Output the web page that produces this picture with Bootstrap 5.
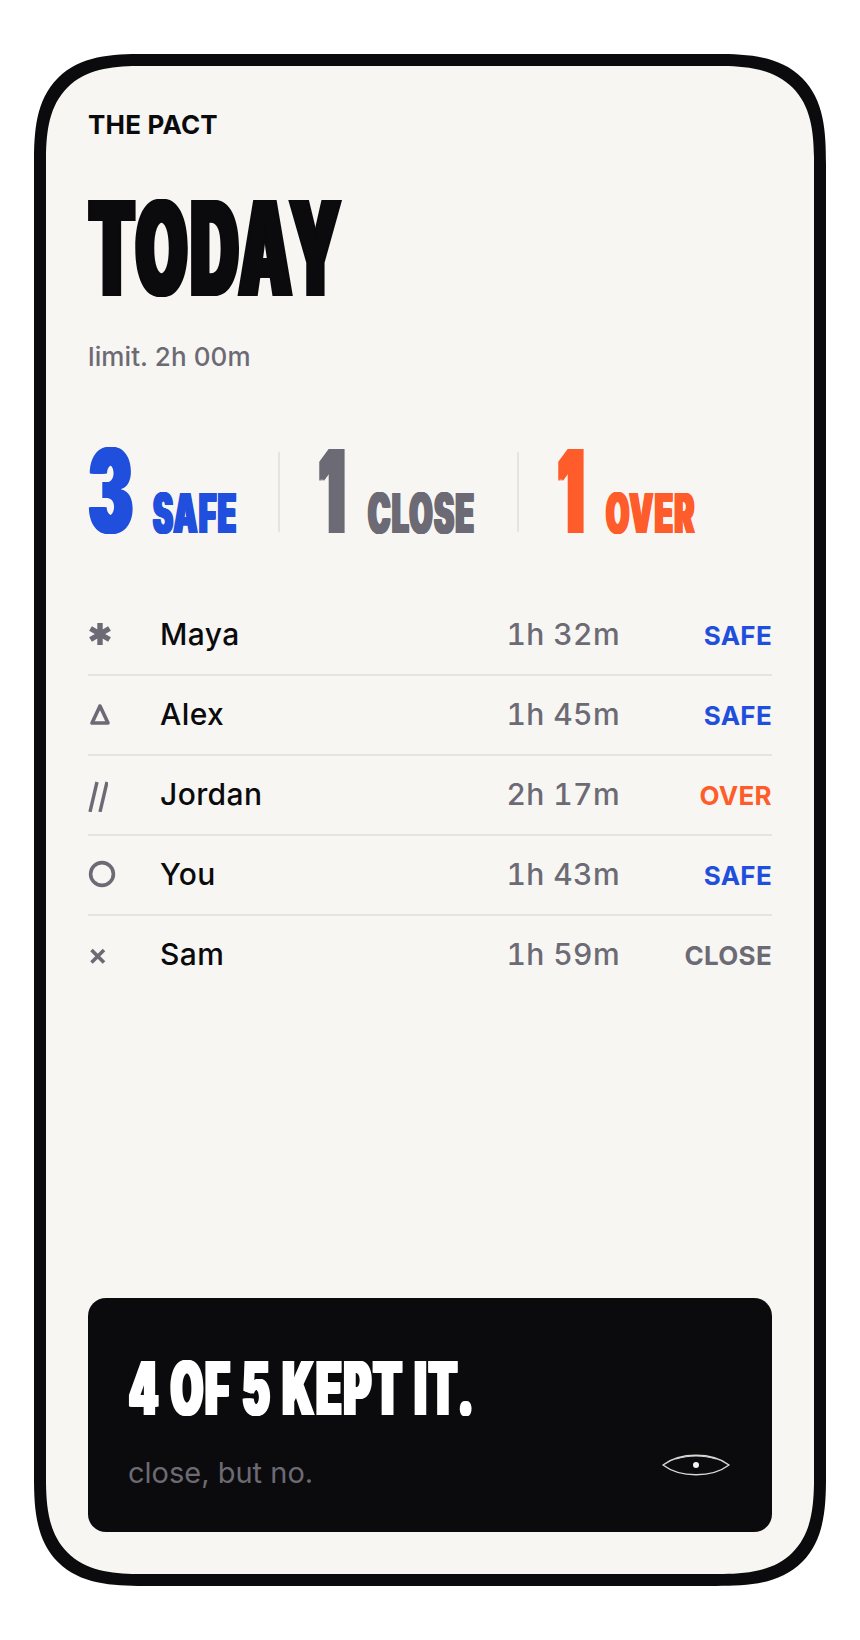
<!DOCTYPE html>
<html lang="en">
<head>
  <meta charset="UTF-8" />
  <meta name="viewport" content="width=device-width, initial-scale=1.0">
  <title>The Pact</title>
  <link href="https://cdn.jsdelivr.net/npm/bootstrap@5.3.0/dist/css/bootstrap.min.css" rel="stylesheet">
  <style>
    :root {
      --ink: #0b0b0d;
      --paper: #f7f6f3;
      --grey: #6c6a74;
      --blue: #1f4fdc;
      --orange: #ff5c2b;
      --rule: #e6e4e0;
    }

    body {
      background: #fff;
      font-family: Inter, "Liberation Sans", sans-serif;
      color: var(--ink);
    }

    .phone-frame {
      width: 792px;
      height: 1532px;
      margin: 54px 34px;
      padding: 42px;
      background: var(--paper);
      border: 12px solid var(--ink);
      border-radius: 110px;
      corner-shape: superellipse(1.5);
    }

    .brand-line {
      font-size: 26px;
      font-weight: 700;
      line-height: 32px;
      margin-top: 1px;
      letter-spacing: 0.2px;
    }

    /* condensed poster face: Inter Black, thickened sideways with shadows, then squeezed */
    .display-text {
      display: block;
      height: 1em;
      margin-left: .01em;
      font-family: Inter, "Liberation Sans", sans-serif;
      font-weight: 900;
      line-height: 1;
      letter-spacing: .05em;
      white-space: nowrap;
      text-shadow: .02em 0, -.02em 0, .04em 0, -.04em 0;
      transform-origin: 0 .864em;
    }

    .today-title {
      font-size: 100px;
      transform: scale(.665, 1.32);
      margin-top: 69px;
    }

    .limit-line {
      font-size: 26px;
      font-weight: 500;
      color: var(--grey);
      line-height: 32px;
      margin-top: 31px;
      letter-spacing: 0.1px;
    }

    .stat-row {
      margin-top: 79px;
      height: 98px;
    }

    .stat-item {
      padding-top: 4px;
      gap: 18px;
    }

    .stat-rule {
      width: 2px;
      height: 80px;
      background: var(--rule);
      margin: 0 38px 0 42px;
    }

    .stat-num {
      font-size: 90px;
    }

    .num-wide {
      width: 46px;
      transform: scale(.72, 1.29);
    }

    .num-thin {
      width: 30px;
      transform: scale(.64, 1.29);
    }

    .stat-word {
      font-size: 46px;
      transform: scale(.65, 1.2);
    }

    .word-safe { width: 83px; }
    .word-close { width: 107px; }
    .word-over { width: 87px; }

    .tone-blue { color: var(--blue); }
    .tone-grey { color: var(--grey); }
    .tone-orange { color: var(--orange); }

    .people-list {
      margin-top: 46px;
    }

    .person-row {
      height: 80px;
      padding-bottom: 2px;
      border-bottom: 2px solid var(--rule);
    }

    .person-row:last-child {
      border-bottom-color: transparent;
    }

    .person-mark {
      width: 72px;
      color: var(--grey);
    }

    .person-mark svg {
      display: block;
    }

    .person-name {
      font-size: 30px;
      font-weight: 500;
      letter-spacing: 0.4px;
    }

    .person-time {
      font-size: 30px;
      font-weight: 550;
      color: var(--grey);
      font-variant-numeric: tabular-nums;
      letter-spacing: 0.4px;
    }

    .person-status {
      width: 152px;
      padding-top: 3px;
      font-size: 26px;
      font-weight: 700;
      letter-spacing: 0.3px;
    }

    .result-card {
      height: 234px;
      padding: 0 40px;
      background: var(--ink);
      border-radius: 18px;
    }

    .result-title {
      font-size: 56px;
      color: #fff;
      transform: scale(.745, 1.33);
      margin-top: 69px;
    }

    .result-foot {
      margin-top: 33px;
    }

    .result-note {
      font-size: 29px;
      color: var(--grey);
      line-height: 34px;
    }

    .eye-mark {
      margin: -3px 2px 0 0;
    }
  </style>
</head>
<body>
  <div class="phone-frame d-flex flex-column">
    <div class="brand-line">THE PACT</div>
    <div class="display-text today-title">TODAY</div>
    <div class="limit-line">limit. 2h 00m</div>

    <div class="stat-row d-flex">
      <div class="stat-item d-flex align-items-baseline tone-blue">
        <span class="display-text stat-num num-wide">3</span>
        <span class="display-text stat-word word-safe">SAFE</span>
      </div>
      <div class="stat-rule"></div>
      <div class="stat-item d-flex align-items-baseline tone-grey">
        <span class="display-text stat-num num-thin">1</span>
        <span class="display-text stat-word word-close">CLOSE</span>
      </div>
      <div class="stat-rule"></div>
      <div class="stat-item d-flex align-items-baseline tone-orange">
        <span class="display-text stat-num num-thin">1</span>
        <span class="display-text stat-word word-over">OVER</span>
      </div>
    </div>

    <div class="people-list">
      <div class="person-row d-flex align-items-center">
        <div class="person-mark">
          <svg width="24" height="24" viewBox="0 0 24 24" fill="none" stroke="currentColor" stroke-width="5.4"><path d="M12 1v22M2.5 6.5l19 11M21.5 6.5l-19 11"/></svg>
        </div>
        <div class="person-name flex-grow-1">Maya</div>
        <div class="person-time">1h 32m</div>
        <div class="person-status text-end tone-blue">SAFE</div>
      </div>
      <div class="person-row d-flex align-items-center">
        <div class="person-mark">
          <svg width="24" height="24" viewBox="0 0 24 24" fill="none" stroke="currentColor" stroke-width="3.6" stroke-linejoin="round"><path d="M12 4L4 21h16z"/></svg>
        </div>
        <div class="person-name flex-grow-1">Alex</div>
        <div class="person-time">1h 45m</div>
        <div class="person-status text-end tone-blue">SAFE</div>
      </div>
      <div class="person-row d-flex align-items-center">
        <div class="person-mark">
          <svg width="20" height="36" viewBox="0 0 20 36" fill="none" stroke="currentColor" stroke-width="3.4"><path d="M9 6L2 36M19 6l-7 30"/></svg>
        </div>
        <div class="person-name flex-grow-1">Jordan</div>
        <div class="person-time">2h 17m</div>
        <div class="person-status text-end tone-orange">OVER</div>
      </div>
      <div class="person-row d-flex align-items-center">
        <div class="person-mark">
          <svg width="28" height="28" viewBox="0 0 28 28" fill="none" stroke="currentColor" stroke-width="3.6"><circle cx="14" cy="14" r="11.4"/></svg>
        </div>
        <div class="person-name flex-grow-1">You</div>
        <div class="person-time">1h 43m</div>
        <div class="person-status text-end tone-blue">SAFE</div>
      </div>
      <div class="person-row d-flex align-items-center">
        <div class="person-mark">
          <svg width="20" height="30" viewBox="0 0 20 30" fill="none" stroke="currentColor" stroke-width="3.6"><path d="M3.5 11l12.5 12.5M16 11L3.5 23.5"/></svg>
        </div>
        <div class="person-name flex-grow-1">Sam</div>
        <div class="person-time">1h 59m</div>
        <div class="person-status text-end tone-grey">CLOSE</div>
      </div>
    </div>

    <div class="result-card mt-auto">
      <div class="display-text result-title">4 OF 5 KEPT IT.</div>
      <div class="result-foot d-flex justify-content-between align-items-start">
        <div class="result-note">close, but no.</div>
        <svg class="eye-mark" width="68" height="24" viewBox="0 0 68 24" fill="none" stroke="#d8d7d3" stroke-width="1.4"><path d="M1 12C18 -1 50 -1 67 12C50 25 18 25 1 12Z"/><path d="M14 6C27 2 41 2 54 6" stroke-width="1"/><circle cx="34" cy="12" r="3" fill="#f7f6f3" stroke="none"/></svg>
      </div>
    </div>
  </div>

  <script src="https://cdn.jsdelivr.net/npm/bootstrap@5.3.0/dist/js/bootstrap.bundle.min.js"></script>
</body>
</html>
